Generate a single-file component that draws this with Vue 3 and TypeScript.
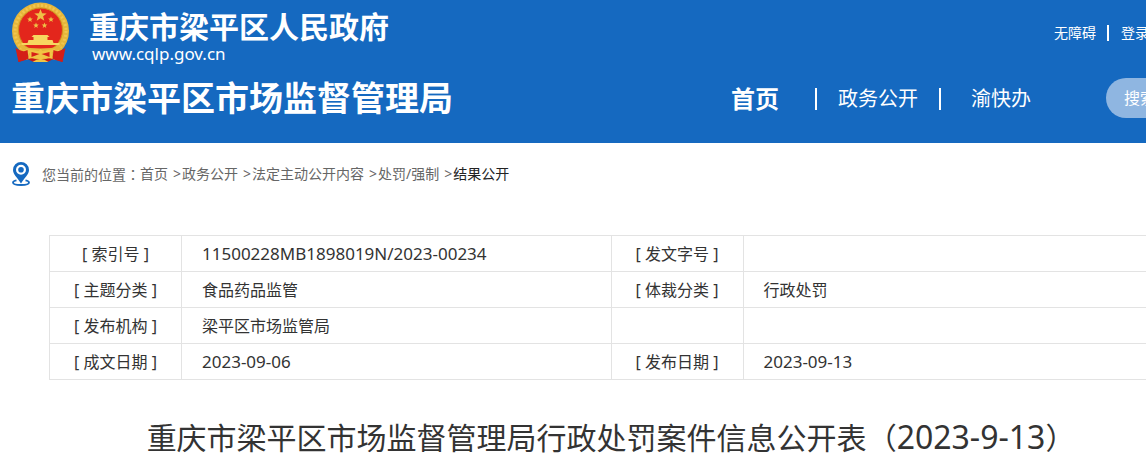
<script setup lang="ts">
interface Field {
  label: string
  value: string
}

const rows: [Field, Field][] = [
  [{ label: '索引号', value: '11500228MB1898019N/2023-00234' }, { label: '发文字号', value: '' }],
  [{ label: '主题分类', value: '食品药品监管' }, { label: '体裁分类', value: '行政处罚' }],
  [{ label: '发布机构', value: '梁平区市场监管局' }, { label: '', value: '' }],
  [{ label: '成文日期', value: '2023-09-06' }, { label: '发布日期', value: '2023-09-13' }],
]

const crumbs: string[] = ['首页', '政务公开', '法定主动公开内容', '处罚/强制', '结果公开']
const isLatin = (text: string): boolean => /^[\x20-\x7e]+$/.test(text)
</script>

<template>
  <div class="page">
    <header class="banner">
      <div class="wrap">
        <div class="top">
          <a class="brand" href="#">
            <svg class="emblem" viewBox="0 0 58 62" aria-hidden="true">
              <path d="M8 43 L7 60 L16 57 L22 60 H36 L42 57 L51 60 L50 43Z" fill="#c91a16" />
              <circle cx="29" cy="29" r="28.5" fill="#e6b63a" />
              <circle cx="29" cy="29" r="25.5" fill="none" stroke="#f0c650" stroke-width="3" stroke-dasharray="2 2" />
              <circle cx="29" cy="28" r="22" fill="#e3261c" stroke="#d0921e" stroke-width="1" />
              <path d="M29 7l1.600 4.200 4.600.2-3.600 2.900 1.200 4.400-3.800-2.500-3.800 2.500 1.200-4.400-3.600-2.900 4.600-.2z" fill="#eec146" />
              <g fill="#eec146">
                <path id="small-star" d="M18.500 14.500l.8 2 2 .1-1.600 1.300.6 2-1.800-1.100-1.800 1.100.6-2-1.600-1.300 2-.1z" />
                <use href="#small-star" x="21" />
                <use href="#small-star" x="6" y="6" />
                <use href="#small-star" x="14.500" y="6" />
              </g>
              <path d="M22 33h14l2 2h-2v3h5l1 3h6v2H10v-2h6l1-3h5v-3h-2z" fill="#f7d660" />
              <path d="M8 44 Q29 49 50 44 L47 48 Q29 53 11 48Z" fill="#e6b63a" />
              <path d="M14 47 L27 49 L29 47 L31 49 L44 47 L39 52 L44 58 Q34 54 29 58 Q24 54 14 58 L19 52Z" fill="#f1c544" />
              <path d="M20 50 L28 52 L20 55Z M38 50 L30 52 L38 55Z" fill="#d72018" />
              <path d="M4 46 Q12 51 16 48 L17 57 L7 60Z M54 46 Q46 51 42 48 L41 57 L51 60Z" fill="#d41e17" />
              <path d="M21 60 Q29 54 37 60Z" fill="#f1c544" />
            </svg>
            <span class="brand-text">
              <strong>重庆市梁平区人民政府</strong>
              <span class="domain">www.cqlp.gov.cn</span>
            </span>
          </a>
          <div class="tools">
            <a href="#">无障碍</a>
            <a href="#">登录</a>
          </div>
        </div>
        <div class="main">
          <h2 class="bureau">重庆市梁平区市场监督管理局</h2>
          <nav class="nav">
            <a class="home" href="#">首页</a>
            <a href="#">政务公开</a>
            <a href="#">渝快办</a>
          </nav>
          <input class="search" type="text" placeholder="搜索" aria-label="搜索" />
        </div>
      </div>
    </header>

    <main class="wrap">
      <nav class="crumbs">
        <svg class="pin" viewBox="0 0 18 24" aria-hidden="true">
          <path d="M4.500 18.300C2 18.800 1 19.500 1 20.500 1 22 4.500 23 9 23s8-1 8-2.500c0-1-1-1.700-3.500-2.200" fill="none" stroke="#1569c0" stroke-width="1.800" />
          <path fill-rule="evenodd" fill="#1569c0" d="M9 0a8 8 0 0 1 8 8c0 4.500-4 7-8 13.500C5 15 1 12.500 1 8a8 8 0 0 1 8-8zm0 2.800a5 5 0 1 0 0 10 5 5 0 0 0 0-10z" />
          <circle cx="9" cy="7.800" r="2.800" fill="#1569c0" />
        </svg>
        <span>您当前的位置<span class="centered-mark">：</span></span>
        <template v-for="(crumb, i) in crumbs" :key="crumb">
          <span v-if="i > 0" class="arrow">&gt;</span>
          <a href="#" :class="{ current: i === crumbs.length - 1 }">{{ crumb }}</a>
        </template>
      </nav>

      <article class="article">
        <table class="info">
          <colgroup>
            <col class="label-col" />
            <col />
            <col class="label-col" />
            <col />
          </colgroup>
          <tbody>
            <tr v-for="(row, r) in rows" :key="r">
              <template v-for="(field, c) in row" :key="c">
                <th scope="row"><template v-if="field.label">[ {{ field.label }} ]</template></th>
                <td :class="{ latin: isLatin(field.value) }">{{ field.value }}</td>
              </template>
            </tr>
          </tbody>
        </table>
        <h1 class="title">重庆市梁平区市场监督管理局行政处罚案件信息公开表<span class="centered-mark">（</span><span class="date">2023-9-13</span><span class="centered-mark">）</span></h1>
      </article>
    </main>
  </div>
</template>

<style>
body {
  margin: 0;
  background: #fff;
}
</style>

<style scoped>
.page {
  overflow: hidden;
  color: #333;
  font-family: "Noto Sans", "Noto Sans CJK SC", sans-serif;
  font-size: 16px;
}
a {
  color: inherit;
  text-decoration: none;
}
.wrap {
  min-width: 1200px;
  margin-left: 11px;
}
.banner {
  background: #1569c0;
  color: #fff;
  padding-bottom: 10px;
}
.top {
  display: flex;
  justify-content: space-between;
  height: 63px;
}
.brand {
  display: flex;
  align-items: flex-start;
  gap: 19px;
  padding-top: 2px;
}
.emblem {
  width: 59px;
  height: 62px;
}
.brand-text {
  display: flex;
  flex-direction: column;
  padding-top: 7px;
}
.brand-text strong {
  font-size: 30px;
  line-height: 36px;
}
.domain {
  padding-left: 3px;
  font-size: 17px;
  line-height: 18px;
}
.tools {
  display: flex;
  align-items: center;
  width: 157px;
  padding-top: 2px;
  font-size: 14px;
  line-height: 16px;
}
.tools a + a {
  margin-left: 11px;
  padding-left: 12px;
  border-left: 2px solid #fff;
}
.main {
  display: flex;
  align-items: center;
  height: 70px;
}
.bureau {
  margin: 0;
  font-size: 34px;
  line-height: 48px;
}
.nav {
  display: flex;
  align-items: center;
  margin-left: auto;
  padding-top: 2px;
  font-size: 20px;
  line-height: 22px;
}
.nav .home {
  font-size: 24px;
  font-weight: bold;
  padding-right: 36px;
}
.nav a + a {
  padding: 0 21px;
  border-left: 2px solid #fff;
}
.nav a:last-child {
  padding: 0 75px 0 30px;
}
.search {
  box-sizing: border-box;
  width: 105px;
  height: 40px;
  padding: 0 18px;
  border: 0;
  border-radius: 20px;
  background: #8fb6e1;
  color: #fff;
  font: inherit;
}
.search::placeholder {
  color: #fff;
  opacity: 1;
}
.crumbs {
  display: flex;
  align-items: center;
  height: 62px;
  color: #666;
  font-size: 14px;
  line-height: 20px;
}
.pin {
  width: 18px;
  height: 24px;
  margin: 0 12px 0 1px;
}
.centered-mark {
  font-family: "Noto Sans CJK TC", sans-serif;
}
.arrow {
  padding: 0 1px 0 5px;
}
.crumbs .current {
  color: #222;
}
.article {
  padding: 30px 38px 0;
}
.info {
  width: 100%;
  border-collapse: collapse;
  table-layout: fixed;
}
.label-col {
  width: 132px;
}
.info th,
.info td {
  height: 35px;
  padding: 0;
  border: 1px solid #e3e3e3;
  font-size: 16px;
  font-weight: normal;
  line-height: 24px;
}
.info th {
  text-align: center;
}
.info td {
  padding: 0 20px;
}
.info .latin {
  font-size: 17px;
}
.title {
  margin: 32px 0 0;
  font-size: 30px;
  font-weight: normal;
  line-height: 48px;
  text-align: center;
  white-space: nowrap;
}
.date {
  font-size: 32px;
}
</style>
